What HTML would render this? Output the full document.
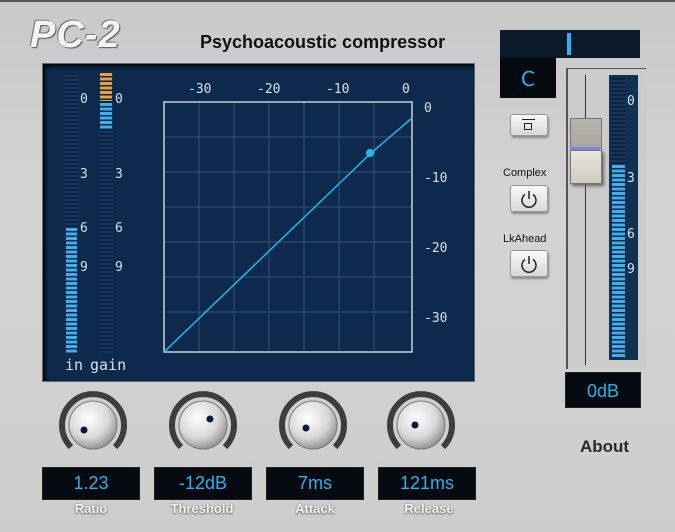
<!DOCTYPE html><html><head><style>
body{margin:0;width:675px;height:532px;overflow:hidden;background:linear-gradient(180deg,#c9c9c9,#d4d4d4 40%,#cdcdcd);font-family:"Liberation Sans",sans-serif;position:relative}
.a{position:absolute}
.seg{background:repeating-linear-gradient(180deg,#0b2443 0 2px,#19365a 2px 4px)}
.on{background:repeating-linear-gradient(180deg,#39b2ee 0 3px,#0b2443 3px 4.5px)}
.lbl{color:#d8e0e8;font-size:13px;font-family:"DejaVu Sans Mono",monospace}
.vb{background:#050a10;border:1px solid #222;color:#27b4ec;font-size:18px;text-align:center;line-height:31px;height:31px}
.kl{color:#f6f6f6;font-weight:bold;font-size:13px;text-align:center;text-shadow:0 0 1px #555,0 1px 2px #666}
.btn{background:linear-gradient(#fafafa,#d8d8d8);border:1px solid #999;border-radius:3px;box-shadow:1px 2px 2px #888}
</style></head><body>
<div class="a" style="left:0;top:0;width:675px;height:2px;background:#555"></div>
<div class="a" style="left:30px;top:14px;font-size:38px;font-style:italic;font-weight:bold;color:#f4f4f4;text-shadow:-1px -1px 0 #777,1px 1px 1px #555;letter-spacing:1px">PC-2</div>
<div class="a" style="left:200px;top:32px;font-size:18px;font-weight:bold;color:#111">Psychoacoustic compressor</div>
<div class="a" style="left:42px;top:63px;width:431px;height:317px;background:#0d2a4c;border:1px solid #667;box-shadow:inset 2px 2px 4px #000"></div>
<div class="a seg" style="left:64px;top:73px;width:14px;height:280px"></div>
<div class="a on" style="left:66px;top:228px;width:11px;height:125px"></div>
<div class="a seg" style="left:99px;top:73px;width:14px;height:280px"></div>
<div class="a" style="left:100px;top:73px;width:12px;height:28px;background:repeating-linear-gradient(180deg,#e6a048 0 3px,#0b2443 3px 4.5px)"></div>
<div class="a on" style="left:100px;top:103px;width:12px;height:26px"></div>
<div class="a lbl" style="left:80px;top:92px">0</div><div class="a lbl" style="left:115px;top:92px">0</div>
<div class="a lbl" style="left:80px;top:167px">3</div><div class="a lbl" style="left:115px;top:167px">3</div>
<div class="a lbl" style="left:80px;top:221px">6</div><div class="a lbl" style="left:115px;top:221px">6</div>
<div class="a lbl" style="left:80px;top:260px">9</div><div class="a lbl" style="left:115px;top:260px">9</div>
<div class="a lbl" style="left:65px;top:356px;font-size:15px">in</div><div class="a lbl" style="left:90px;top:356px;font-size:15px">gain</div>
<svg class="a" style="left:160px;top:78px" width="300" height="290">
<g font-family="DejaVu Sans Mono,monospace" font-size="13" fill="#d8e0e8">
<text x="28" y="15">-30</text><text x="97" y="15">-20</text><text x="166" y="15">-10</text><text x="242" y="15">0</text>
<text x="264" y="34">0</text><text x="264" y="104">-10</text><text x="264" y="174">-20</text><text x="264" y="244">-30</text></g>
<g stroke="#2f5578" stroke-width="1">
<path d="M39 24V274M74 24V274M109 24V274M144 24V274M179 24V274M214 24V274M4 59H252M4 94H252M4 129H252M4 164H252M4 199H252M4 234H252"/></g>
<rect x="4" y="24" width="248" height="250" fill="none" stroke="#c8d0d8" stroke-width="1.5"/>
<path d="M4 274L210 76L252 40" stroke="#2bb4ec" stroke-width="1.5" fill="none"/>
<circle cx="210" cy="75" r="4" fill="#2bb4ec"/>
</svg>
<div class="a" style="left:500px;top:30px;width:140px;height:28px;background:#0b1a2a"></div>
<div class="a" style="left:567px;top:33px;width:4px;height:22px;background:#27b4ec"></div>
<div class="a" style="left:500px;top:58px;width:56px;height:40px;background:#050a10;color:#27b4ec;font-size:20px;text-align:center;line-height:42px;font-family:DejaVu Sans,sans-serif">C</div>
<div class="a btn" style="left:510px;top:114px;width:36px;height:20px"><div class="a" style="left:11px;top:4px;width:13px;height:1px;background:#222"></div><div class="a" style="left:13px;top:8px;width:8px;height:7px;border:1.5px solid #222;box-sizing:border-box"></div></div>
<div class="a" style="left:503px;top:167px;font-size:11px;color:#111">Complex</div>
<div class="a btn" style="left:510px;top:185px;width:36px;height:25px"><svg width="36" height="25"><path d="M14 8.5A7 7 0 1 0 22 8.5" stroke="#222" stroke-width="1.5" fill="none"/><path d="M18 5V13" stroke="#222" stroke-width="1.5"/></svg></div>
<div class="a" style="left:503px;top:233px;font-size:11px;color:#111">LkAhead</div>
<div class="a btn" style="left:510px;top:250px;width:36px;height:25px"><svg width="36" height="25"><path d="M14 8.5A7 7 0 1 0 22 8.5" stroke="#222" stroke-width="1.5" fill="none"/><path d="M18 5V13" stroke="#222" stroke-width="1.5"/></svg></div>
<div class="a" style="left:566px;top:68px;width:78px;height:300px;border-left:2px solid #555;border-top:1px solid #555;background:#cbcbcb"></div>
<div class="a" style="left:585px;top:75px;width:1px;height:290px;background:#333"></div>
<div class="a" style="left:609px;top:75px;width:29px;height:285px;background:#12304f"></div>
<div class="a seg" style="left:611px;top:78px;width:15px;height:280px"></div>
<div class="a on" style="left:612px;top:165px;width:13px;height:193px"></div>
<div class="a lbl" style="left:627px;top:94px">0</div><div class="a lbl" style="left:627px;top:171px">3</div><div class="a lbl" style="left:627px;top:227px">6</div><div class="a lbl" style="left:627px;top:262px">9</div>
<div class="a" style="left:570px;top:118px;width:30px;height:31px;background:linear-gradient(#b6b4ac,#a8a69e);border:1px solid #777"></div>
<div class="a" style="left:570px;top:147px;width:30px;height:3px;background:#7f84e6"></div>
<div class="a" style="left:570px;top:150px;width:30px;height:32px;background:linear-gradient(#e8e6dc,#cfcbbe);border:1px solid #777;box-shadow:2px 2px 3px #666"></div>
<div class="a vb" style="left:565px;top:372px;width:74px;height:34px;line-height:36px">0dB</div>
<div class="a" style="left:580px;top:437px;font-size:17px;font-weight:bold;color:#2a2a2a">About</div>
<svg class="a" style="left:40px;top:385px" width="440" height="80">
<defs><radialGradient id="k" cx="40%" cy="35%" r="70%"><stop offset="0" stop-color="#fff"/><stop offset=".6" stop-color="#d8d8d8"/><stop offset="1" stop-color="#8a8a8a"/></radialGradient></defs>
<g id="kn"><path d="M-22 22A31 31 0 1 1 22 22" stroke="#3d3d3d" stroke-width="6" fill="none" transform="translate(53,40)"/><circle cx="53" cy="40" r="24" fill="url(#k)" stroke="#777"/></g>
<use href="#kn" x="110"/><use href="#kn" x="220"/><use href="#kn" x="328"/>
<circle cx="44" cy="45" r="3.5" fill="#0a1a3a"/><circle cx="170" cy="34" r="3.5" fill="#0a1a3a"/><circle cx="266" cy="43" r="3.5" fill="#0a1a3a"/><circle cx="375" cy="40" r="3.5" fill="#0a1a3a"/>
</svg>
<div class="a vb" style="left:42px;top:467px;width:96px">1.23</div>
<div class="a vb" style="left:154px;top:467px;width:96px">-12dB</div>
<div class="a vb" style="left:266px;top:467px;width:96px">7ms</div>
<div class="a vb" style="left:378px;top:467px;width:96px">121ms</div>
<div class="a kl" style="left:42px;top:501px;width:98px">Ratio</div>
<div class="a kl" style="left:152px;top:501px;width:100px">Threshold</div>
<div class="a kl" style="left:266px;top:501px;width:98px">Attack</div>
<div class="a kl" style="left:380px;top:501px;width:98px">Release</div>
</body></html>
